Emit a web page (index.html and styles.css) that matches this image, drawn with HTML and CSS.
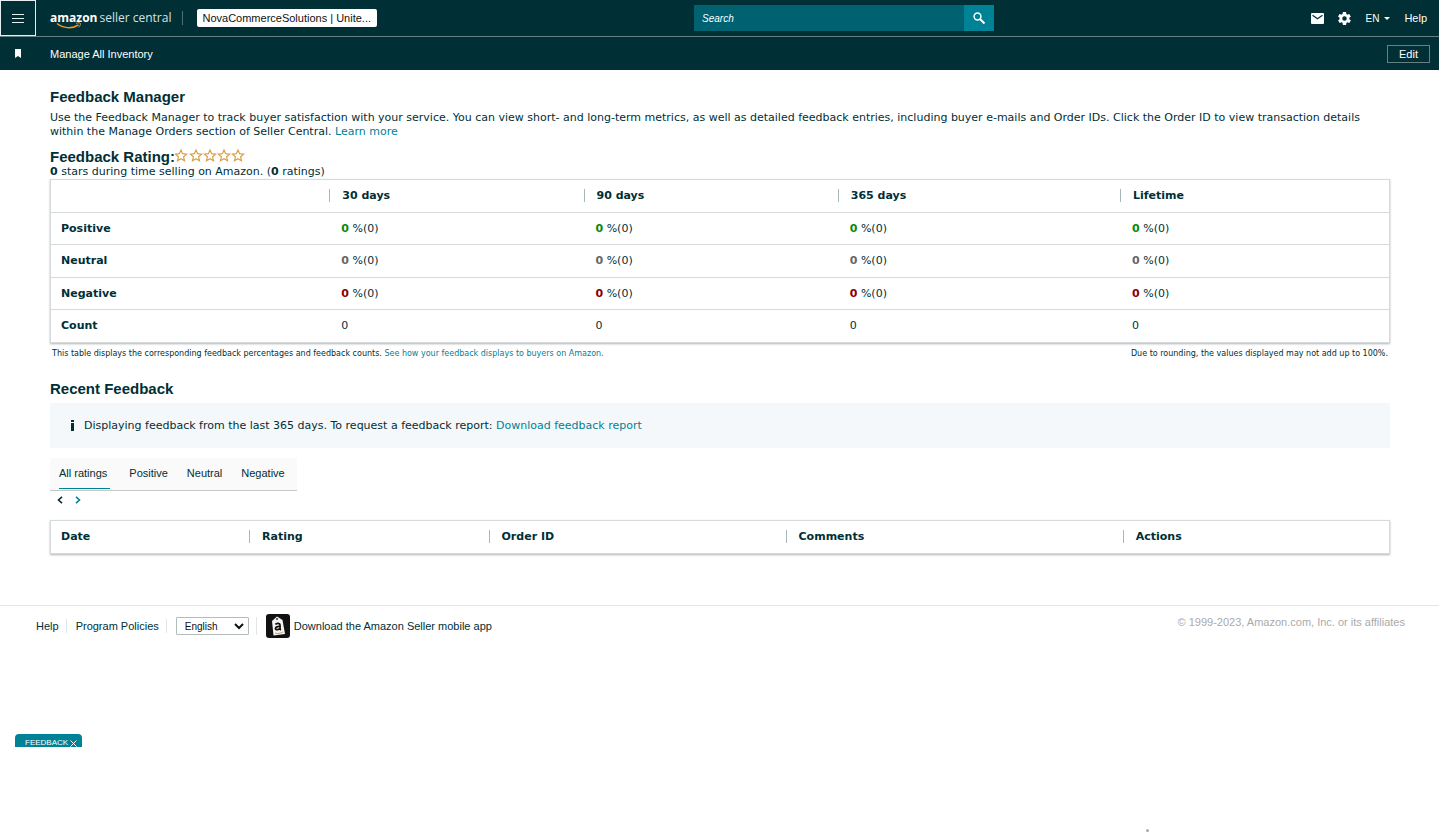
FILE: index.html
```html
<!DOCTYPE html>
<html lang="en">
<head>
  <meta charset="UTF-8">
  <title>Feedback Manager</title>
  <link rel="stylesheet" href="styles.css">
</head>
<body>
  <header class="topbar">
    <button class="menu-btn" aria-label="Menu">
      <svg width="12" height="10" viewBox="0 0 12 10"><path d="M0 1.5h12M0 5.5h12M0 9.5h12" stroke="#e6eff0" stroke-width="1"/></svg>
    </button>
    <a class="logo" href="#"><b>amazon</b><span>seller central</span>
      <svg class="smile" width="26" height="8" viewBox="0 0 26 8"><path d="M1 1.5C7 6.5 16 7 22.5 3" fill="none" stroke="#f19a20" stroke-width="1.5"/><path d="M20 1.4c2-.8 4-.8 4.400 0 .2 1.200-.4 2.800-1.600 4" fill="none" stroke="#f19a20" stroke-width="1"/></svg>
    </a>
    <button class="store">NovaCommerceSolutions | Unite...</button>
    <form class="search">
      <input type="text" placeholder="Search" aria-label="Search">
      <button type="button" aria-label="Go">
        <svg width="13" height="13" viewBox="0 0 13 13"><circle cx="4.500" cy="4.500" r="3.400" fill="none" stroke="#fff" stroke-width="1.500"/><path d="M7 7l4.500 4.500" stroke="#fff" stroke-width="2"/></svg>
      </button>
    </form>
    <nav class="tools">
      <a href="#" aria-label="Messages"><svg width="13" height="11" viewBox="0 0 13 11"><rect width="13" height="11" rx="1" fill="#fff"/><path d="M1.500 2.300l5 3.400 5-3.400" fill="none" stroke="#002f36" stroke-width="1.200"/></svg></a>
      <a href="#" aria-label="Settings"><svg width="13" height="13" viewBox="2 2 20 20"><path fill="#fff" d="M19.400 13c0-.3.1-.6.1-1s0-.7-.1-1l2.100-1.600c.2-.2.200-.4.100-.6l-2-3.500c-.1-.2-.4-.3-.6-.2l-2.500 1c-.5-.4-1.100-.7-1.700-1l-.4-2.600c0-.3-.2-.5-.5-.5h-4c-.2 0-.4.200-.5.400l-.4 2.700c-.6.200-1.100.600-1.700 1l-2.400-1c-.3-.1-.5 0-.7.200l-2 3.500c-.1.200 0 .5.200.6L4.500 11c0 .3-.1.600-.1 1s0 .7.100 1l-2.100 1.600c-.2.200-.2.400-.1.600l2 3.500c.1.200.4.300.6.200l2.500-1c.5.400 1.100.7 1.700 1l.4 2.600c0 .3.200.5.500.5h4c.3 0 .5-.2.500-.4l.4-2.700c.6-.2 1.100-.6 1.700-1l2.500 1c.2.100.5 0 .6-.2l2-3.500c.1-.2.1-.5-.1-.6zM12 15.500a3.500 3.500 0 1 1 0-7 3.500 3.500 0 0 1 0 7z"/></svg></a>
      <button class="lang">EN <svg width="6" height="3" viewBox="0 0 6 3"><path d="M0 0h6L3 3z" fill="#fff"/></svg></button>
      <a href="#">Help</a>
    </nav>
  </header>
  <div class="subbar">
    <svg class="bookmark" width="6" height="9" viewBox="0 0 6 9"><path d="M0 0h6v9L3 7 0 9z" fill="#fff"/></svg>
    <a href="#">Manage All Inventory</a>
    <button class="edit">Edit</button>
  </div>

  <main>
    <h1>Feedback Manager</h1>
    <p class="intro">Use the Feedback Manager to track buyer satisfaction with your service. You can view short- and long-term metrics, as well as detailed feedback entries, including buyer e-mails and Order IDs. Click the Order ID to view transaction details within the Manage Orders section of Seller Central. <a href="#">Learn more</a></p>

    <div class="rating">
      <h2>Feedback Rating:</h2>
      <svg width="71" height="13" viewBox="0 0 71 13" role="img" aria-label="0 stars">
        <defs><path id="star" d="M6 1l1.600 3.700 4 .4-3 2.700.9 3.900-3.500-2-3.500 2 .9-3.900-3-2.700 4-.4z" fill="#fff" stroke="#d9a04a" stroke-width="1.200"/></defs>
        <use href="#star"/><use href="#star" x="15"/><use href="#star" x="29"/><use href="#star" x="43"/><use href="#star" x="57"/>
      </svg>
    </div>
    <p><b>0</b> stars during time selling on Amazon. (<b>0</b> ratings)</p>

    <table class="grid summary">
      <thead>
        <tr><th></th><th><span>30 days</span></th><th><span>90 days</span></th><th><span>365 days</span></th><th><span>Lifetime</span></th></tr>
      </thead>
      <tbody>
        <tr class="positive"><th>Positive</th><td><b>0</b> %(0)</td><td><b>0</b> %(0)</td><td><b>0</b> %(0)</td><td><b>0</b> %(0)</td></tr>
        <tr class="neutral"><th>Neutral</th><td><b>0</b> %(0)</td><td><b>0</b> %(0)</td><td><b>0</b> %(0)</td><td><b>0</b> %(0)</td></tr>
        <tr class="negative"><th>Negative</th><td><b>0</b> %(0)</td><td><b>0</b> %(0)</td><td><b>0</b> %(0)</td><td><b>0</b> %(0)</td></tr>
        <tr><th>Count</th><td>0</td><td>0</td><td>0</td><td>0</td></tr>
      </tbody>
    </table>
    <div class="notes">
      <span>This table displays the corresponding feedback percentages and feedback counts. <a href="#">See how your feedback displays to buyers on Amazon.</a></span>
      <span>Due to rounding, the values displayed may not add up to 100%.</span>
    </div>

    <h2 class="recent-title">Recent Feedback</h2>
    <div class="info">
      <svg width="5" height="11" viewBox="0 0 5 11"><path d="M1 0h3v2H1zM1 3h3v8H1z" fill="#002f36"/></svg>
      <span>Displaying feedback from the last 365 days. To request a feedback report: <a href="#">Download feedback report</a></span>
    </div>

    <nav class="tabs">
      <a class="active" href="#">All ratings</a>
      <a href="#">Positive</a>
      <a href="#">Neutral</a>
      <a href="#">Negative</a>
    </nav>
    <div class="pager">
      <button aria-label="Previous"><svg width="6" height="8" viewBox="0 0 6 8"><path d="M5 .8L1.500 4 5 7.200" fill="none" stroke="#002f36" stroke-width="1.600"/></svg></button>
      <button aria-label="Next"><svg width="6" height="8" viewBox="0 0 6 8"><path d="M1 .8L4.500 4 1 7.200" fill="none" stroke="#008296" stroke-width="1.600"/></svg></button>
    </div>

    <table class="grid recent">
      <thead>
        <tr><th>Date</th><th><span>Rating</span></th><th><span>Order ID</span></th><th><span>Comments</span></th><th><span>Actions</span></th></tr>
      </thead>
    </table>
  </main>

  <footer>
    <a class="item" href="#">Help</a>
    <a class="item" href="#">Program Policies</a>
    <div class="item">
      <div class="select">
        <select aria-label="Language"><option>English</option></select>
        <svg width="10" height="7" viewBox="0 0 10 7"><path d="M1 1l4 4 4-4" fill="none" stroke="#111" stroke-width="2"/></svg>
      </div>
    </div>
    <a class="app" href="#">
      <svg width="24" height="24" viewBox="0 0 24 24">
        <rect width="24" height="24" rx="3" fill="#111"/>
        <path d="M6 7l5-4.500L16.500 6 19 20l-11.500 1.500z" fill="#f4f4f0"/>
        <circle cx="11" cy="5" r="1" fill="#333"/>
        <path d="M9.500 10.500c1-1.700 4.500-1.500 4.500.5v3.500c0 .8.400 1.200 1 1.500M14 12.500c-2.500-.2-4.500.4-4.500 2s3.500 1.800 4.500-.5" fill="none" stroke="#111" stroke-width="1.800"/>
        <path d="M9 19c2.500 1 5.500.5 8-1" fill="none" stroke="#e3a04a" stroke-width="1"/>
      </svg>
      Download the Amazon Seller mobile app
    </a>
    <span class="copyright">© 1999-2023, Amazon.com, Inc. or its affiliates</span>
  </footer>

  <button class="feedback-tab">FEEDBACK <svg width="7" height="7" viewBox="0 0 7 7"><path d="M.5.5l6 6M6.500.5l-6 6" stroke="#fff" stroke-width="1"/></svg></button>
  <i class="dot"></i>
</body>
</html>
```

FILE: styles.css
```css
* { box-sizing: border-box; }
body {
  margin: 0;
  background: #fff;
  color: #002f36;
  font-family: Verdana, "DejaVu Sans", sans-serif;
  font-size: 11px;
  line-height: 14px;
}
a { color: #008296; text-decoration: none; }
button, input, select { font-family: Arial, "Liberation Sans", sans-serif; font-size: 11px; margin: 0; }
svg { display: block; }

/* top bars */
.topbar {
  display: flex;
  align-items: center;
  height: 37px;
  background: #002f36;
  border-bottom: 1px solid #64807f;
  font-family: Arial, "Liberation Sans", sans-serif;
}
.menu-btn {
  display: flex;
  align-items: center;
  justify-content: center;
  width: 36px;
  height: 36px;
  background: none;
  border: 1px solid #e6eff0;
}
.logo {
  position: relative;
  display: flex;
  gap: 2px;
  margin-left: 14px;
  padding-right: 11px;
  border-right: 1px solid #4d6f74;
  color: #fff;
  font-family: "Open Sans", sans-serif;
  font-size: 12px;
}
.logo span { color: #d5e2e4; }
.smile { position: absolute; left: 6px; top: 11px; }
.store {
  width: 180px;
  height: 18px;
  margin-left: 14px;
  padding: 0 5px;
  background: #fff;
  border: none;
  border-radius: 2px;
  color: #111;
  text-align: left;
  white-space: nowrap;
}
.search { display: flex; width: 300px; height: 26px; margin-left: 22%; }
.search input {
  flex: 1;
  min-width: 0;
  padding: 0 8px;
  background: #006170;
  border: none;
  color: #fff;
  font-size: 10px;
}
.search input::placeholder { color: #fff; font-style: italic; }
.search button {
  display: flex;
  align-items: center;
  justify-content: center;
  width: 30px;
  padding: 0;
  background: #008296;
  border: none;
}
.tools { display: flex; align-items: center; gap: 14px; margin-left: auto; margin-right: 12px; }
.tools a, .lang { color: #fff; }
.lang { display: flex; align-items: center; gap: 5px; padding: 0; background: none; border: none; font-size: 10px; }
.subbar {
  display: flex;
  align-items: center;
  height: 33px;
  padding: 0 9px 0 15px;
  background: #002f36;
  font-family: Arial, "Liberation Sans", sans-serif;
}
.subbar a { margin-left: 29px; color: #fff; }
.edit {
  width: 43px;
  height: 18px;
  margin-left: auto;
  padding: 0;
  background: none;
  border: 1px solid #64807f;
  color: #fff;
}

/* content */
main { padding: 19px 49px 0 50px; }
h1, h2 {
  margin: 0;
  font-family: Arial, "Liberation Sans", sans-serif;
  font-size: 15px;
  line-height: 16px;
}
p { margin: 0; }
.intro { margin-top: 6px; }
.rating { display: flex; margin-top: 10px; }
.grid {
  width: 100%;
  table-layout: fixed;
  border-collapse: separate;
  border-spacing: 0;
  border: 1px solid #d5dbdb;
  box-shadow: 0 1px 2px rgba(0, 0, 0, 0.3);
}
.grid th, .grid td { height: 32px; padding: 0 0 0 12px; text-align: left; }
.grid th:first-child { padding-left: 10px; }
.grid thead th + th { padding: 0 0 1px; }
.grid thead span { display: block; height: 13px; line-height: 13px; padding-left: 12px; border-left: 1px solid #aab7b8; }
.summary tbody tr > * { border-top: 1px solid #d5dbdb; }
.summary tbody tr:nth-child(even) > * { height: 33px; }
.summary th:nth-child(1) { width: 20.8%; }
.summary th:nth-child(2) { width: 19%; }
.summary th:nth-child(3) { width: 19%; }
.summary th:nth-child(4) { width: 21.1%; }
.positive b { color: #0a8a0a; }
.neutral b { color: #666; }
.negative b { color: #8b0000; }
.notes { display: flex; justify-content: space-between; padding: 4px 2px 0; font-size: 8px; }
.recent-title { margin-top: 20px; }
.info {
  display: flex;
  align-items: center;
  gap: 9px;
  height: 45px;
  margin-top: 6px;
  padding-left: 20px;
  background: #f4f8fa;
}
.tabs {
  display: flex;
  width: fit-content;
  gap: 19px;
  margin-top: 10px;
  padding: 0 12px 1px 9px;
  background: #fafafa;
  border-bottom: 1px solid #c4c9c9;
  font-family: Arial, "Liberation Sans", sans-serif;
}
.tabs a { height: 31px; line-height: 31px; color: #002f36; }
.tabs .active { padding-right: 3px; border-bottom: 1px solid #008296; }
.pager { display: flex; gap: 12px; padding: 5px 7px; }
.pager button { padding: 0; background: none; border: none; }
.recent { margin-top: 11px; }
.recent th:nth-child(1) { width: 14.8%; }
.recent th:nth-child(2) { width: 17.9%; }
.recent th:nth-child(3) { width: 22.2%; }
.recent th:nth-child(4) { width: 25.2%; }

/* footer */
footer {
  display: flex;
  align-items: center;
  margin-top: 51px;
  padding: 8px 34px 8px 36px;
  border-top: 1px solid #e3e6e6;
  font-family: Arial, "Liberation Sans", sans-serif;
}
footer a { color: #002f36; }
.item { margin-right: 9px; padding-right: 7px; border-right: 1px solid #e3e6e6; }
.select { position: relative; }
.select select {
  appearance: none;
  display: block;
  width: 73px;
  height: 18px;
  padding: 0 8px;
  background: #fff;
  border: 1px solid #b4bcbc;
  border-radius: 1px;
  color: #111;
  font-size: 10px;
}
.select svg { position: absolute; right: 5px; top: 6px; pointer-events: none; }
.app { display: flex; align-items: center; gap: 4px; }
.copyright { align-self: flex-start; margin-left: auto; color: #aaa; line-height: 16px; }

.feedback-tab {
  position: fixed;
  left: 15px;
  bottom: 87px;
  display: flex;
  align-items: center;
  gap: 2px;
  height: 13px;
  padding: 5px 5px 0 10px;
  background: #008296;
  border: none;
  border-radius: 4px 4px 0 0;
  color: #fff;
  font-size: 8px;
  line-height: 8px;
}
.dot { position: fixed; right: 290px; bottom: 2px; width: 3px; height: 3px; border-radius: 2px; background: #aaa; }
```
